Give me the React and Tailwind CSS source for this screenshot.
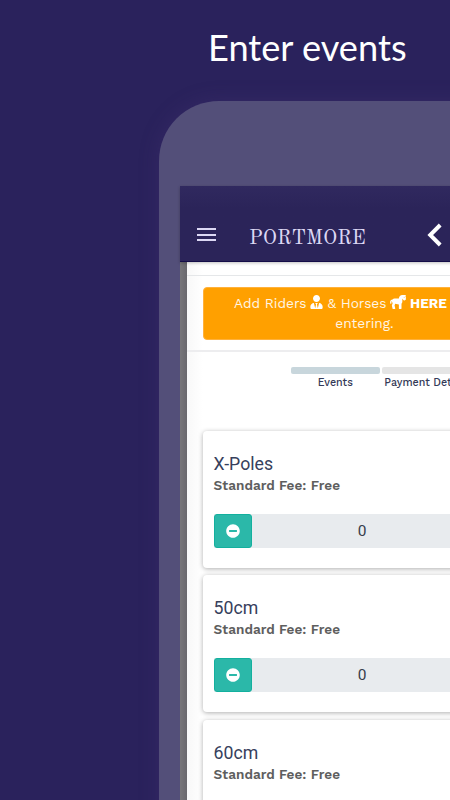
import { FaHorse, FaMinusCircle, FaUserTie } from "react-icons/fa";

const events = [
  { name: "X-Poles", fee: "Free", entries: 0 },
  { name: "50cm", fee: "Free", entries: 0 },
  { name: "60cm", fee: "Free", entries: 0 },
];

const AppHeader = () => (
  <header className="relative z-10 flex h-[76px] shrink-0 items-end bg-gradient-to-b from-[#30295f] from-0% via-[#2b2459] via-30% to-[#2b2459] border-b border-[#140d48] shadow-[0_1px_3px_rgba(0,0,0,0.25)]">
    {/* Menu button */}
    <button className="mb-[20px] ml-[17px] flex h-[13px] w-[19px] flex-col justify-between">
      <span className="h-[2px] w-full bg-[#dcd8f4]" />
      <span className="h-[2px] w-full bg-[#dcd8f4]" />
      <span className="h-[2px] w-full bg-[#dcd8f4]" />
    </button>
    <h1 className="mb-[8px] ml-[33px] w-[178px] font-['Old_Standard_TT','Liberation_Serif',serif] text-[20.3px] leading-[28px] text-[#dcd8f4]">
      PORTMORE
    </h1>
    <svg className="mb-[14px] shrink-0" width="15" height="24" viewBox="0 0 15 24" fill="none">
      <path d="M13.2 2L3.2 12L13.2 22" stroke="#fff" strokeWidth="3.9" />
    </svg>
  </header>
);

const Notice = () => (
  <div className="ml-[15.5px] mt-[10.5px] h-[53.5px] w-[324px] shrink-0 rounded-[4px] border border-[#ffb13c] bg-[#ffa000] pt-[5px] text-center font-['Work_Sans','Noto_Sans',sans-serif] text-[13.7px] leading-[20px] text-[#fff6e5]">
    <div className="flex items-center whitespace-nowrap pl-[30.5px]">
      <span className="w-[76px] text-left">Add Riders</span>
      <FaUserTie className="mb-[2px] h-[14px] w-[13px] shrink-0 text-white" />
      <span className="ml-[4.5px] w-[62.5px] text-left">&amp; Horses</span>
      <FaHorse className="mb-[2px] h-[14px] w-[16px] shrink-0 text-white" />
      <b className="ml-[4px] text-white">HERE</b>
    </div>
    <div>entering.</div>
  </div>
);

const Steps = () => (
  <div className="ml-[103.5px] mt-[15px] flex shrink-0 gap-[2px] text-center font-['Work_Sans','Noto_Sans',sans-serif] text-[10.7px] font-medium leading-[14px] text-[#343a57]">
    <div className="w-[89.5px] shrink-0">
      <div className="mb-[2px] h-[7px] rounded-[2px] bg-[#c8d6dc]" />
      Events
    </div>
    <div className="w-[90px] shrink-0 whitespace-nowrap">
      <div className="mb-[2px] h-[7px] rounded-[2px] bg-[#e5e5e5]" />
      Payment Details
    </div>
  </div>
);

const EventCard = ({ name, fee, entries }) => (
  <article className="h-[137px] w-[324px] shrink-0 rounded-[4px] bg-white px-[11px] pt-[21px] shadow-[0_1px_5px_rgba(0,0,0,0.32)]">
    <h2 className="font-[Roboto,sans-serif] text-[17.7px] leading-[24px] text-[#36405c]">{name}</h2>
    <p className="font-['Work_Sans','Noto_Sans',sans-serif] text-[13.6px] font-semibold leading-[18px] text-[#5e5e5e]">
      Standard Fee: {fee}
    </p>
    <div className="mt-[20px] flex h-[34px] bg-[#e8ebee]">
      <button className="flex w-[38.5px] items-center justify-center rounded-[3px] border border-[#13b09e] bg-[#2bb8a9] text-white">
        <FaMinusCircle size={14} />
      </button>
      <span className="w-[220px] text-center font-[Roboto,sans-serif] text-[15.5px] leading-[34px] text-[#363d4b]">
        {entries}
      </span>
    </div>
  </article>
);

const App = () => (
  <main className="h-[800px] w-[450px] overflow-hidden bg-[#2a225c]">
    <h1 className="flex h-[101px] items-start pl-[208px] pt-[24px] font-[Lato,sans-serif] text-[36.2px] leading-[46px] text-white">
      <span className="whitespace-nowrap">Enter events</span>
    </h1>

    {/* Phone */}
    <div className="ml-[159px] h-[1100px] w-[420px] rounded-tl-[60px] bg-[#534f79] pl-[21px] pt-[85px] shadow-[0_0_20px_rgba(75,55,120,0.3)]">
      <div className="flex h-full flex-col">
        <AppHeader />
        <div className="flex min-h-0 flex-1">
          <div className="w-[7px] shrink-0 bg-gradient-to-r from-[#77767a] to-[#69686d]" />
          <div className="flex w-[392px] flex-col bg-gradient-to-r from-[#f8f8f8] to-white to-4%">
            <div className="h-[14px] shrink-0 border-b border-[#e5e7e9]" />
            <Notice />
            <div className="mt-[10px] h-[2px] shrink-0 bg-[#ededef]" />
            <Steps />
            <div className="ml-[15.5px] mt-[41.2px] flex flex-col gap-[7.3px]">
              {events.map((event) => (
                <EventCard key={event.name} {...event} />
              ))}
            </div>
          </div>
        </div>
      </div>
    </div>
  </main>
);

export default App;
